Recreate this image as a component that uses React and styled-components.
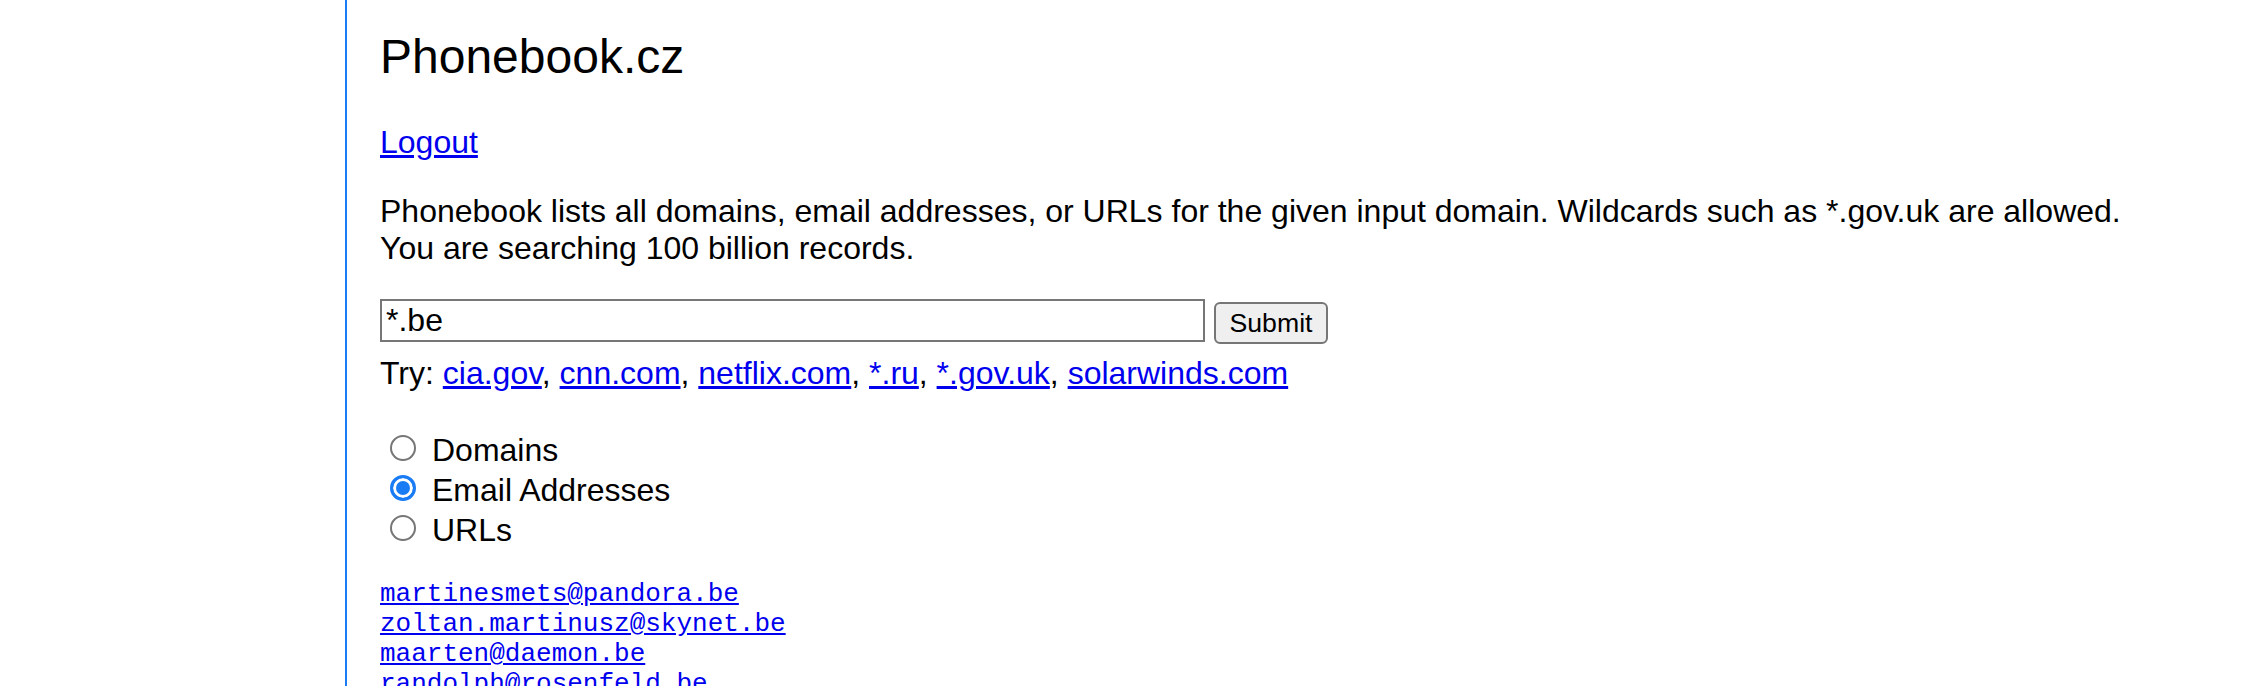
import React from "react";
import styled, { createGlobalStyle } from "styled-components";

const GlobalStyle = createGlobalStyle`
  html, body {
    margin: 0;
    padding: 0;
    background: #ffffff;
  }
  body {
    font-family: "Liberation Sans", Arial, Helvetica, sans-serif;
    color: #000000;
  }
`;

const Page = styled.div`
  height: 100vh;
  overflow: hidden;
  padding-left: 345px;
  box-sizing: border-box;
`;

const Column = styled.main`
  min-height: 100%;
  border-left: 2px solid #1a7cf5;
  padding: 29px 0 0 33px;
  box-sizing: border-box;
  font-size: 32px;
  line-height: normal;
`;

const Title = styled.h2`
  margin: 0 0 40px;
  font-size: 48px;
  font-weight: normal;
  line-height: normal;
`;

const Para = styled.p`
  margin: 0 0 32px;
`;

const Link = styled.a`
  color: #0000ee;
  text-decoration: underline;
  cursor: pointer;
`;

const Form = styled.form`
  margin: 0;
`;

const SearchRow = styled.div`
  display: flex;
  align-items: flex-start;
  gap: 9px;
`;

const SearchInput = styled.input`
  box-sizing: border-box;
  width: 825px;
  height: 43px;
  margin: 0;
  padding: 0 4px;
  border: 2px solid #767676;
  border-radius: 0;
  font-family: "Liberation Sans", Arial, sans-serif;
  font-size: 32px;
  color: #000;
  background: #fff;
  outline: none;
`;

const SubmitButton = styled.button`
  box-sizing: border-box;
  width: 114px;
  height: 42px;
  margin: 3px 0 0;
  padding: 0;
  border: 2px solid #767676;
  border-radius: 6px;
  background: #efefef;
  font-family: "Liberation Sans", Arial, sans-serif;
  font-size: 26.67px;
  color: #000;
`;

const TryLine = styled.div`
  margin-top: 11px;
`;

const RadioGroup = styled.div`
  margin-top: 37px;
  display: flex;
  flex-direction: column;
`;

const RadioLine = styled.label`
  display: flex;
  align-items: baseline;
`;

const Radio = styled.input.attrs({ type: "radio", name: "kind" })`
  appearance: none;
  -webkit-appearance: none;
  box-sizing: border-box;
  width: 26px;
  height: 26px;
  margin: 6px 16px 0 10px;
  border: 2px solid #767676;
  border-radius: 50%;
  background: #fff;
  flex: none;

  &:checked {
    border: 3px solid #1a7cf5;
    background: #1a7cf5;
    box-shadow: inset 0 0 0 3px #ffffff;
  }
`;

const Results = styled.div`
  margin-top: 30px;
  font-family: "Liberation Mono", "Courier New", monospace;
  font-size: 26px;
  line-height: normal;
`;

const ResultLink = styled(Link)`
  display: block;
  width: max-content;
`;

const tries = ["cia.gov", "cnn.com", "netflix.com", "*.ru", "*.gov.uk", "solarwinds.com"];

const emails = [
  "martinesmets@pandora.be",
  "zoltan.martinusz@skynet.be",
  "maarten@daemon.be",
  "randolph@rosenfeld.be",
];

export default function App() {
  return (
    <>
      <GlobalStyle />
      <Page>
        <Column>
          <Title>Phonebook.cz</Title>
          <Para>
            <Link href="#">Logout</Link>
          </Para>
          <Para>
            Phonebook lists all domains, email addresses, or URLs for the given input domain. Wildcards such as *.gov.uk are allowed.
            <br />
            You are searching 100 billion records.
          </Para>
          <Form onSubmit={(e) => e.preventDefault()}>
            <SearchRow>
              <SearchInput type="text" defaultValue="*.be" />
              <SubmitButton type="submit">Submit</SubmitButton>
            </SearchRow>
            <TryLine>
              Try:{" "}
              {tries.map((t, i) => (
                <React.Fragment key={t}>
                  <Link href="#">{t}</Link>
                  {i < tries.length - 1 ? ", " : ""}
                </React.Fragment>
              ))}
            </TryLine>
            <RadioGroup>
              <RadioLine>
                <Radio value="domains" />
                Domains
              </RadioLine>
              <RadioLine>
                <Radio value="emails" defaultChecked />
                Email Addresses
              </RadioLine>
              <RadioLine>
                <Radio value="urls" />
                URLs
              </RadioLine>
            </RadioGroup>
          </Form>
          <Results>
            {emails.map((e) => (
              <ResultLink key={e} href="#">
                {e}
              </ResultLink>
            ))}
          </Results>
        </Column>
      </Page>
    </>
  );
}
